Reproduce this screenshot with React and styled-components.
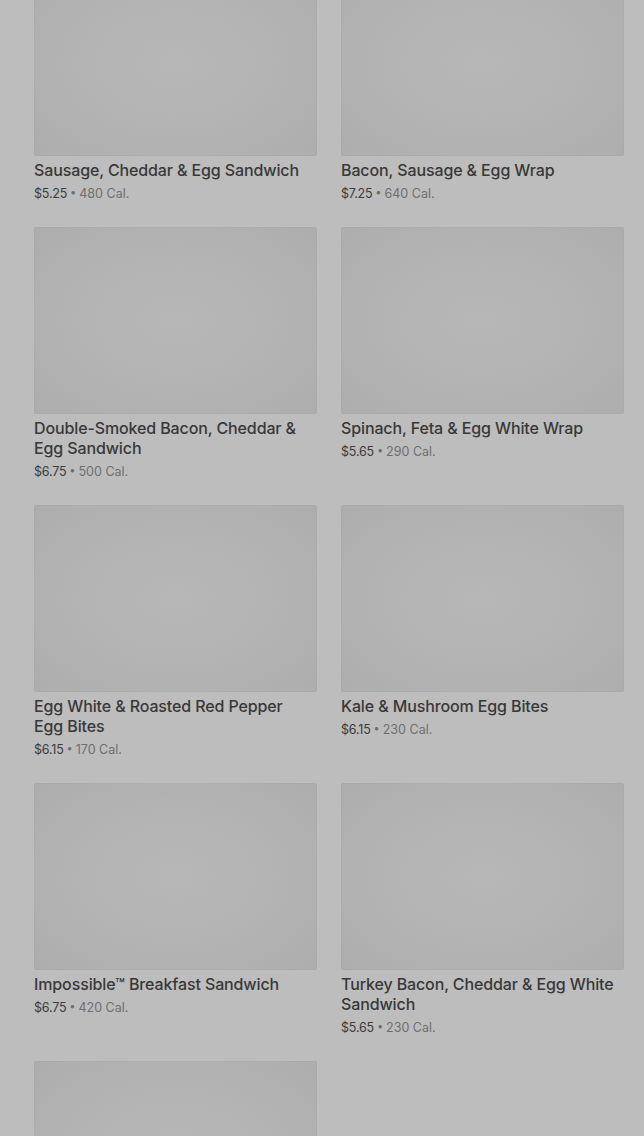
import React from "react";
import styled, { createGlobalStyle } from "styled-components";

const items = [
  { name: "Sausage, Cheddar & Egg Sandwich", price: "$5.25", cal: "480 Cal." },
  { name: "Bacon, Sausage & Egg Wrap", price: "$7.25", cal: "640 Cal." },
  { name: "Double-Smoked Bacon, Cheddar & Egg Sandwich", price: "$6.75", cal: "500 Cal." },
  { name: "Spinach, Feta & Egg White Wrap", price: "$5.65", cal: "290 Cal." },
  { name: "Egg White & Roasted Red Pepper Egg Bites", price: "$6.15", cal: "170 Cal." },
  { name: "Kale & Mushroom Egg Bites", price: "$6.15", cal: "230 Cal." },
  { name: "Impossible™ Breakfast Sandwich", price: "$6.75", cal: "420 Cal." },
  { name: "Turkey Bacon, Cheddar & Egg White Sandwich", price: "$5.65", cal: "230 Cal." },
  { name: "", price: "", cal: "" },
];

function App() {
  return (
    <>
      <GlobalStyle />
      <Page>
        <Grid>
          {items.map((item, i) => (
            <Card key={i}>
              <Photo />
              {item.name && (
                <>
                  <Name>{item.name}</Name>
                  <Meta>
                    <Price>{item.price}</Price>
                    <Dot>•</Dot>
                    <Cal>{item.cal}</Cal>
                  </Meta>
                </>
              )}
            </Card>
          ))}
        </Grid>
      </Page>
    </>
  );
}

export default App;

const GlobalStyle = createGlobalStyle`
  html, body {
    margin: 0;
    padding: 0;
    background: #bdbdbd;
    overflow: hidden;
  }
  body {
    font-family: Inter, "Noto Sans", sans-serif;
  }
`;

const Page = styled.div`
  height: 1136px;
  overflow: hidden;
  padding: 0 20px 0 34px;
  box-sizing: border-box;
`;

const Grid = styled.div`
  display: grid;
  grid-template-columns: 283px 283px;
  column-gap: 24px;
  row-gap: 24px;
  margin-top: -31px;
`;

const Card = styled.div`
  display: flex;
  flex-direction: column;
`;

const Photo = styled.div`
  height: 187px;
  border-radius: 2px;
  background: radial-gradient(ellipse at center, #b7b7b7 0%, #b3b3b3 55%, #adadad 100%);
  box-shadow: inset 0 0 0 1px rgba(0, 0, 0, 0.02);
`;

const Name = styled.div`
  margin-top: 4px;
  padding-right: 8px;
  font-size: 16px;
  line-height: 20px;
  font-weight: 500;
  color: #383838;
  letter-spacing: -0.12px;
`;

const Meta = styled.div`
  margin-top: 4px;
  display: flex;
  align-items: center;
  gap: 3px;
  font-size: 12.5px;
  line-height: 19px;
`;

const Price = styled.span`
  color: #3b3b3b;
  letter-spacing: -0.2px;
`;

const Dot = styled.span`
  color: #6e6e6e;
  font-size: 11px;
  line-height: 1;
  transform: translateY(-1px);
`;

const Cal = styled.span`
  color: #6e6e6e;
`;
